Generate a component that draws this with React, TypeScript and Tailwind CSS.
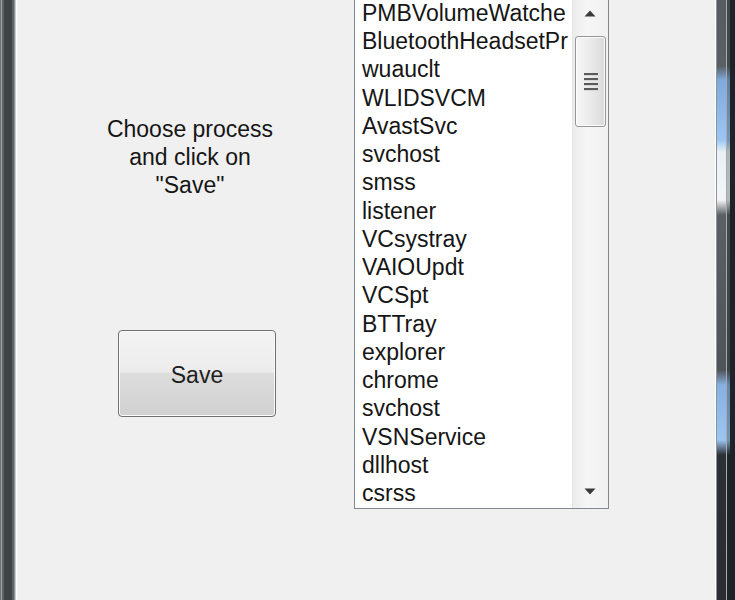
import React from "react";

const items = [
  "PMBVolumeWatche",
  "BluetoothHeadsetPr",
  "wuauclt",
  "WLIDSVCM",
  "AvastSvc",
  "svchost",
  "smss",
  "listener",
  "VCsystray",
  "VAIOUpdt",
  "VCSpt",
  "BTTray",
  "explorer",
  "chrome",
  "svchost",
  "VSNService",
  "dllhost",
  "csrss",
];

const glass =
  "bg-[linear-gradient(to_bottom,#575c60_0px,#5a5f63_66px,#7fa9dc_80px,#9cc6f2_140px,#e9f1f4_152px,#f2f6f7_200px,#5b6064_215px,#4f5458_370px,#86b0e2_385px,#9cc6f2_440px,#2c3136_455px,#2a2e33_600px)]";

function LeftFrame() {
  return (
    <div className="flex h-full shrink-0">
      <div className="w-px bg-[#6e7275]" />
      <div className="w-px bg-[#9ea2a4]" />
      <div className="w-[2px] bg-[#5d6265]" />
      <div className="w-[8px] bg-[#3e4346]" />
      <div className="w-[2px] bg-[#5f6467]" />
      <div className="w-px bg-[#8d9295]" />
      <div className="w-px bg-[#c8cdd0]" />
      <div className="w-px bg-[#ffffff]" />
      <div className="w-px bg-[#f4f4f4]" />
    </div>
  );
}

function RightFrame() {
  return (
    <div className="flex h-full shrink-0">
      <div className="w-px bg-[#ffffff]" />
      <div className="w-px bg-[#8f9396]" />
      <div className={`w-[9px] ${glass}`} />
      <div className="w-px bg-[#a7abae]" />
      <div className={`w-[3px] ${glass} brightness-75`} />
      <div className="w-[5px] bg-[#1e222a]" />
    </div>
  );
}

function Scrollbar() {
  return (
    <div className="relative h-full w-[36px] shrink-0 border-l border-[#e6e6e6] bg-[linear-gradient(to_right,#ececec,#f6f6f6_40%,#f1f1f1)]">
      <div className="absolute left-[11px] top-[11px]">
        <svg width="12" height="7" viewBox="0 0 12 7">
          <path d="M0.5 6.5 L6 0.5 L11.5 6.5 Z" fill="#3a3a3a" />
        </svg>
      </div>
      <div className="absolute left-[2px] top-[37px] flex h-[91px] w-[31px] flex-col items-center justify-center gap-[3px] rounded-[3px] border border-[#979797] bg-[linear-gradient(to_right,#f6f6f6,#eaeaea_50%,#dadada)] shadow-[inset_0_0_0_1px_#fbfbfb]">
        <div className="h-[2px] w-[14px] bg-[#5a5a5a] shadow-[0_1px_0_#d8d8d8]" />
        <div className="h-[2px] w-[14px] bg-[#5a5a5a] shadow-[0_1px_0_#d8d8d8]" />
        <div className="h-[2px] w-[14px] bg-[#5a5a5a] shadow-[0_1px_0_#d8d8d8]" />
        <div className="h-[2px] w-[14px] bg-[#5a5a5a] shadow-[0_1px_0_#d8d8d8]" />
      </div>
      <div className="absolute bottom-[13px] left-[11px]">
        <svg width="12" height="7" viewBox="0 0 12 7">
          <path d="M0.5 0.5 L11.5 0.5 L6 6.5 Z" fill="#3a3a3a" />
        </svg>
      </div>
    </div>
  );
}

export default function App() {
  return (
    <div
      className="flex h-[600px] w-[735px] overflow-hidden bg-[#f0f0f0] text-[#161616]"
      style={{ fontFamily: '"Liberation Sans", Arial, sans-serif' }}
    >
      <LeftFrame />
      <div className="flex h-full flex-1 bg-[#f0f0f0]">
        <div className="flex w-[336px] shrink-0 flex-col">
          <div className="ml-[62px] mt-[115px] w-[220px] text-center text-[23px] leading-[28px]">
            <div>Choose process</div>
            <div>and click on</div>
            <div>"Save"</div>
          </div>
          <button className="ml-[100px] mt-[131px] flex h-[87px] w-[158px] items-center justify-center rounded-[4px] border border-[#707070] bg-[linear-gradient(to_bottom,#f3f3f3_0%,#ececec_48%,#dddddd_50%,#d0d0d0_100%)] pt-[3px] text-[23px] text-[#1e1e1e] shadow-[inset_0_0_0_1px_#fbfbfb]">
            Save
          </button>
        </div>
        <div className="mt-[-2px] flex h-[511px] w-[255px] shrink-0 border border-[#828790] bg-white">
          <div className="flex-1 overflow-hidden pl-[7px]">
            {items.map((it, i) => (
              <div
                key={i}
                className="h-[28.24px] whitespace-nowrap text-[23px] leading-[28.24px]"
              >
                {it}
              </div>
            ))}
          </div>
          <Scrollbar />
        </div>
      </div>
      <RightFrame />
    </div>
  );
}
